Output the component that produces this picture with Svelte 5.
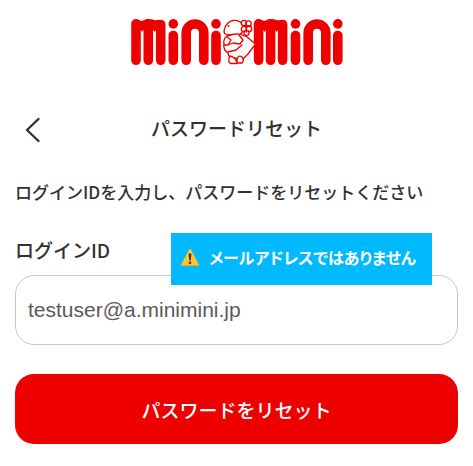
<script>
  let loginId = $state('testuser@a.minimini.jp');
</script>

<main>
  <header>
    <svg class="logo" viewBox="0 0 214 52" role="img" aria-label="minimini">
      <g fill="none" stroke="#ee0000" stroke-width="9.6" stroke-linecap="round">
        <path d="M6 44.300V7.800M18.300 44.300V7.800M30.700 44.300V8.500" />
        <path d="M43.300 19.500V44.300M56.200 44.300V16.800A8.800 8.800 0 0 1 73.800 16.800V44.300M86 19.500V44.300" />
        <path d="M128.600 44.300V7.800M140.600 44.300V7.800M152.600 44.300V8.500" />
        <path d="M165.500 19.500V44.300M178.200 44.300V16.800A8.800 8.800 0 0 1 195.800 16.800V44.300M207.800 19.500V44.300" />
      </g>
      <g fill="#ee0000">
        <path d="M6 4.500L9 4L12 5L16 3.200H22L25 4.200L29 4L32 8V15H28Q24.600 13.500 24.500 17Q24.400 13.500 22 14H15Q12.200 13.500 12.100 17Q12 13.500 9 14H6Z" />
        <path d="M128.600 4.500L131.600 4L134.500 5L138.500 3.200H144L147 4.200L151 4L154 8V15H150Q146.700 13.500 146.600 17Q146.500 13.500 144 14H137.500Q134.700 13.500 134.600 17Q134.500 13.500 131.600 14H128.600Z" />
        <circle cx="43.300" cy="7.900" r="4.800" />
        <circle cx="86" cy="7.900" r="4.800" />
        <circle cx="165.500" cy="7.900" r="4.800" />
        <circle cx="207.800" cy="7.900" r="4.800" />
      </g>
      <g fill="#fff" stroke="#ee0000" stroke-width="1.300" stroke-linejoin="round" stroke-linecap="round">
        <path d="M97 20Q93 23 94 28Q93 34 98 37Q98 41 103 42L113 43L118 38L125.500 28L117 21L108 17Z" />
        <path d="M94.500 17.500C93 13 97 5.500 103 4.500C108 3.800 112 6 113.500 11C114 16 111 19 107 18C103 17.500 98 20 94.500 17.500Z" />
        <circle cx="98.500" cy="10" r="1" fill="#ee0000" stroke="none" />
        <path d="M97 21L101 24L98 29L103 27L110 28L113 24L109 19M94 29L98 29M98 36L106 34L112 29" fill="none" />
        <path d="M100 40Q97 47 101 47.500H107Q106 41 100 40ZM107 45Q107 39 111.500 40.500Q115 44 112 47H107Z" />
        <circle cx="114" cy="7" r="2.700" />
        <circle cx="118.500" cy="7.500" r="2.700" />
        <circle cx="114" cy="13" r="2.700" />
        <circle cx="119" cy="13" r="2.700" />
        <circle cx="116.500" cy="17" r="2.500" />
        <path d="M113 10H121M116.300 6V16" />
      </g>
    </svg>
  </header>

  <div class="title">
    <a href="#back" aria-label="戻る">
      <svg viewBox="0 0 16 26" aria-hidden="true"><path d="M13.500 2L2 13L13.500 24" /></svg>
    </a>
    <h1>パスワードリセット</h1>
  </div>

  <p class="lead">ログインIDを入力し、パスワードをリセットください</p>

  <form onsubmit={(e) => e.preventDefault()}>
    <div class="field">
      <label for="login-id">ログインID</label>
      <input id="login-id" type="text" bind:value={loginId} aria-describedby="hint" />
      <div class="hint" id="hint" role="note">
        <svg viewBox="0 0 20 19" aria-hidden="true">
          <path d="M10 2L18 17H2Z" fill="#ffc52e" stroke="#ffc52e" stroke-width="2" stroke-linejoin="round" />
          <path d="M1.500 17.500H18.500" stroke="#e9a33a" stroke-width="1" stroke-linecap="round" />
          <path d="M8.600 6Q10 4.500 11.400 6L10.700 12.500H9.300Z" fill="#40352c" />
          <circle cx="10" cy="14.700" r="1.300" fill="#40352c" />
        </svg>
        <span>メールアドレスではありません</span>
      </div>
    </div>
    <button type="submit">パスワードをリセット</button>
  </form>
</main>

<style>
  :global(body) {
    margin: 0;
    background: #fff;
  }
  main {
    padding: 16px 15px 22px;
    color: #333031;
    font-family: "Noto Sans CJK JP", sans-serif;
    font-weight: 500;
  }
  header {
    display: flex;
    justify-content: center;
  }
  .logo {
    width: 214px;
    height: 52px;
  }
  .title {
    display: grid;
    grid-template-columns: 32px 1fr 32px;
    align-items: center;
    margin-top: 44px;
  }
  .title a {
    display: flex;
    padding: 4px 0 0 10px;
  }
  .title svg {
    width: 16px;
    height: 26px;
    fill: none;
    stroke: #333031;
    stroke-width: 2.4;
    stroke-linecap: round;
    stroke-linejoin: round;
  }
  h1 {
    margin: 0;
    font-size: 19px;
    line-height: 32px;
    font-weight: 500;
    text-align: center;
  }
  .lead {
    margin: 36px 0 0;
    font-size: 17px;
    line-height: 24px;
    white-space: nowrap;
  }
  .field {
    position: relative;
    display: flex;
    flex-direction: column;
    margin-top: 30px;
  }
  label {
    font-size: 19px;
    line-height: 32px;
  }
  input {
    box-sizing: border-box;
    width: 100%;
    height: 70px;
    margin-top: 9px;
    padding: 0 12px;
    border: 1px solid #c8c8c8;
    border-radius: 19px;
    background: #fff;
    color: #5e595a;
    font: 400 21px "Liberation Sans", sans-serif;
  }
  .hint {
    position: absolute;
    top: -1px;
    right: 26px;
    box-sizing: border-box;
    display: flex;
    align-items: center;
    gap: 9px;
    height: 52px;
    padding: 0 16px 4px 9px;
    background: #00b9ff;
    color: #fff;
    font-size: 16px;
    line-height: 24px;
    font-weight: 700;
    font-feature-settings: "palt";
    white-space: nowrap;
  }
  .hint svg {
    width: 20px;
    height: 19px;
  }
  button {
    width: 100%;
    height: 70px;
    margin-top: 29px;
    border: 0;
    border-radius: 19px;
    background: #ee0000;
    color: #fff;
    font: 500 19px "Noto Sans CJK JP", sans-serif;
  }
</style>
